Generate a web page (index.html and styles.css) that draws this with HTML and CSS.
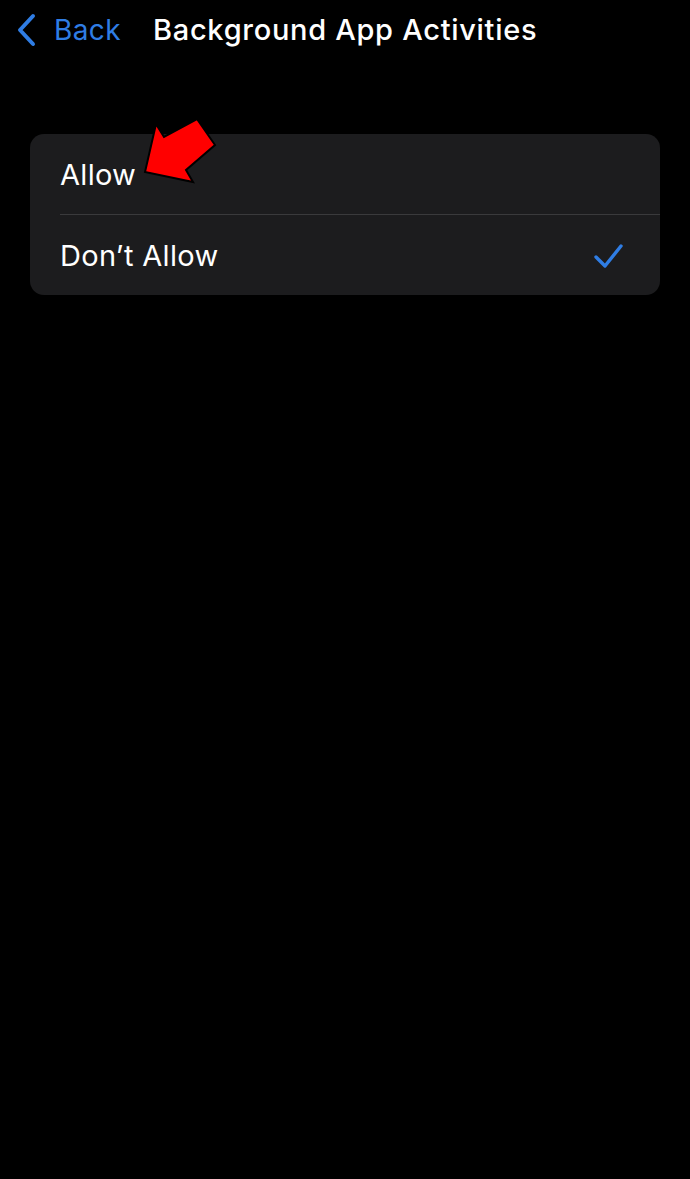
FILE: index.html
```html
<!DOCTYPE html>
<html lang="en">
  <head>
    <meta charset="UTF-8" />
    <meta name="viewport" content="width=device-width, initial-scale=1" />
    <title>Background App Activities</title>
    <link rel="stylesheet" href="styles.css">
  </head>
  <body>
    <header class="nav-bar">
      <a class="back" href="#">
        <svg class="chevron" width="22" height="34" viewBox="0 0 22 34" aria-hidden="true">
          <path d="M16 3 L3 17 L16 31" fill="none" stroke="#2f7de4" stroke-width="4" stroke-linecap="round" stroke-linejoin="round" />
        </svg>
        <span>Back</span>
      </a>
      <h1>Background App Activities</h1>
    </header>

    <main class="content">
      <div class="options" role="radiogroup">
        <div class="option" role="radio" aria-checked="false">
          <span>Allow</span>
          <svg class="pointer" width="90" height="80" viewBox="0 0 90 80" aria-hidden="true">
            <polygon points="4,60 15,12 23,25 56,7 74,33 45,58 52,70" fill="#ff0000" stroke="#000" stroke-width="2" stroke-linejoin="miter" />
          </svg>
        </div>
        <div class="option" role="radio" aria-checked="true">
          <span>Don’t Allow</span>
          <svg class="check" width="34" height="30" viewBox="0 0 34 30" aria-hidden="true">
            <path d="M4 16 L13 25 L29 5" fill="none" stroke="#2f7de4" stroke-width="3.4" stroke-linecap="round" stroke-linejoin="round" />
          </svg>
        </div>
      </div>
    </main>
  </body>
</html>
```

FILE: styles.css
```css
* {
  box-sizing: border-box;
}
body {
  margin: 0;
  background: #000;
  color: #fff;
  font-family: Inter, "Noto Sans", sans-serif;
  min-height: 100vh;
}
.nav-bar {
  display: flex;
  align-items: center;
  height: 59px;
  padding: 0 0 0 17px;
}
.back {
  display: flex;
  align-items: center;
  gap: 15px;
  color: #2f7de4;
  text-decoration: none;
  font-size: 28px;
  letter-spacing: 0.4px;
}
h1 {
  margin: 0 0 0 32px;
  font-size: 29px;
  font-weight: 500;
  letter-spacing: 0.7px;
}
.content {
  padding: 75px 30px 0;
}
.options {
  background: #1c1c1e;
  border-radius: 14px;
}
.option {
  position: relative;
  display: flex;
  align-items: center;
  justify-content: space-between;
  height: 80px;
  margin-left: 30px;
  padding-right: 34px;
  font-size: 29px;
  letter-spacing: 0.3px;
}
.option + .option {
  border-top: 1px solid #3a3a3c;
  height: 81px;
}
.pointer {
  position: absolute;
  left: 81px;
  top: -22px;
}
.check {
  margin-top: 2px;
}
```
